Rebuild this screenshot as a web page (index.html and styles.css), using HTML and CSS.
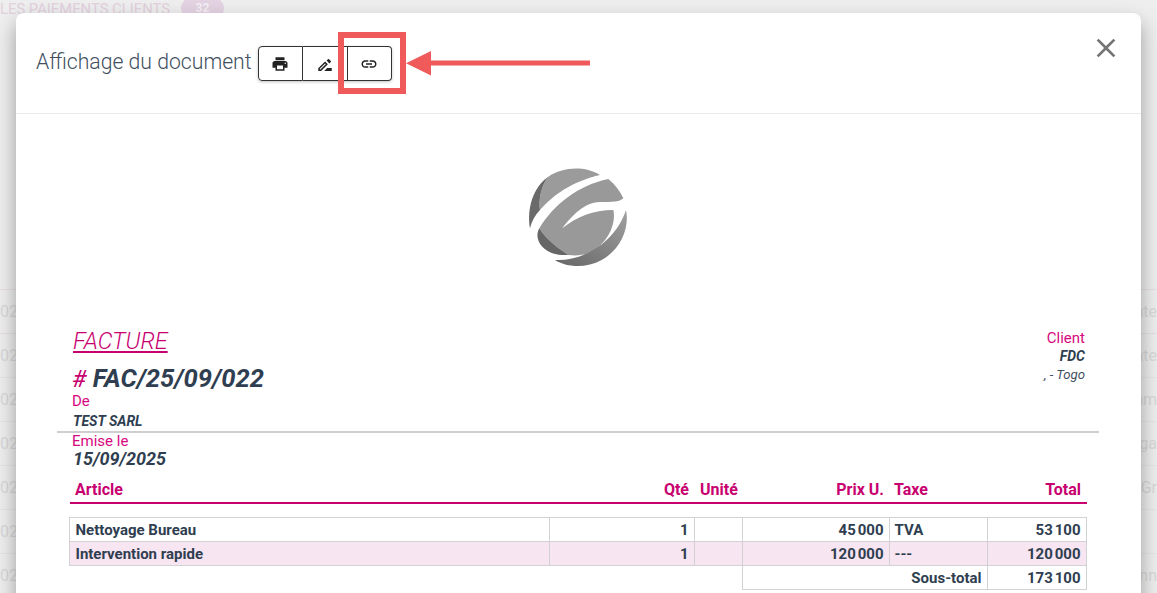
FILE: index.html
```html
<!DOCTYPE html>
<html lang="fr">
<head>
<meta charset="utf-8">
<title>Affichage du document</title>
<link rel="stylesheet" href="styles.css">
</head>
<body>
<div class="page">
  <div class="tabs"><span class="tab-label">LES PAIEMENTS CLIENTS</span><span class="tab-badge">32</span></div>
  <div class="rows">
    <div class="row row-pink"><span>02</span><span>nte</span></div>
    <div class="row row-pink"><span>02</span><span>nte</span></div>
    <div class="row"><span>02</span><span>nm</span></div>
    <div class="row"><span>02</span><span>nga</span></div>
    <div class="row"><span>02</span><span>Gr</span></div>
    <div class="row"><span>02</span><span></span></div>
    <div class="row"><span>02</span><span>nn</span></div>
  </div>
</div>

<div class="modal">
  <header class="modal-head">
    <h1 class="modal-title">Affichage du document</h1>
    <div class="btn-group">
      <button class="btn" type="button"><svg class="ic" viewBox="0 0 24 24"><path d="M19 8H5c-1.66 0-3 1.34-3 3v6h4v4h12v-4h4v-6c0-1.66-1.34-3-3-3zm-3 11H8v-5h8v5zm3-7c-.55 0-1-.45-1-1s.45-1 1-1 1 .45 1 1-.45 1-1 1zm-1-9H6v4h12V3z"/></svg></button>
      <button class="btn" type="button"><svg class="ic ic-pen" viewBox="0 0 24 24"><path d="M15 16l-4 4h10v-4h-6zm-2.94-8.81L3 16.25V20h3.75l9.06-9.06-3.75-3.75zM5.92 18H5v-.92l7.06-7.06.92.92L5.92 18zm13.79-9.96c.39-.39.39-1.02 0-1.41l-2.34-2.34c-.2-.2-.45-.29-.71-.29-.25 0-.51.1-.7.29l-1.83 1.83 3.75 3.75 1.83-1.83z"/></svg></button>
      <button class="btn" type="button"><svg class="ic" viewBox="0 0 24 24"><path d="M3.9 12c0-1.71 1.39-3.1 3.1-3.1h4V7H7c-2.76 0-5 2.24-5 5s2.24 5 5 5h4v-1.9H7c-1.71 0-3.1-1.39-3.1-3.1zM8 13h8v-2H8v2zm9-6h-4v1.9h4c1.71 0 3.1 1.39 3.1 3.1s-1.39 3.1-3.1 3.1h-4V17h4c2.76 0 5-2.24 5-5s-2.24-5-5-5z"/></svg></button>
    </div>
    <button class="close" type="button" aria-label="Fermer"><svg viewBox="0 0 24 24"><path d="M19 6.41L17.59 5 12 10.59 6.41 5 5 6.41 10.59 12 5 17.59 6.41 19 12 13.41 17.59 19 19 17.59 13.41 12z"/></svg></button>
  </header>

  <div class="doc">
    <div class="logo">
      <svg viewBox="0 0 315 315" class="logo-svg">
        <defs>
          <linearGradient id="rim" x1="1" y1="0" x2="0" y2="1">
            <stop offset="0" stop-color="#a0a0a0"/>
            <stop offset="1" stop-color="#666666"/>
          </linearGradient>
        </defs>
        <path fill="#9b9b9b" d="M70 35C110 8 175 0 225 30C140 50 85 90 45 135C40 100 50 60 70 35Z"/>
        <path fill="#6a6a6a" d="M15 190C5 130 25 65 70 35C50 60 40 100 45 135C30 150 20 170 15 190Z"/>
        <path fill="#999999" d="M43 190C85 120 160 60 250 42C270 58 285 78 295 100C280 115 245 110 215 112C170 118 135 160 112 190C155 155 205 135 265 135C275 180 245 240 190 265C170 272 150 272 130 270C100 250 65 225 43 190Z"/>
        <path fill="#666666" d="M43 190C65 225 100 250 130 270C100 272 70 265 52 245C36 228 33 208 43 190Z"/>
        <path fill="url(#rim)" d="M90 285C170 290 270 235 303 135C315 190 285 255 230 285C185 310 125 308 90 285Z"/>
      </svg>
    </div>

    <div class="doc-top">
      <div class="doc-left">
        <div class="doc-type">FACTURE</div>
        <div class="doc-num"><span class="pink-plain">#</span> FAC/25/09/022</div>
        <div class="label label-de">De</div>
        <div class="company">TEST SARL</div>
      </div>
      <div class="doc-right">
        <div class="label">Client</div>
        <div class="client-name">FDC</div>
        <div class="client-addr">, - Togo</div>
      </div>
    </div>
    <hr class="sep">
    <div class="label label-date">Emise le</div>
    <div class="date">15/09/2025</div>

    <div class="items-head">
      <span>Article</span><span class="r">Qté</span><span class="unit">Unité</span><span class="r">Prix U.</span><span>Taxe</span><span class="r">Total</span>
    </div>

    <table class="items">
      <colgroup><col class="c1"><col class="c2"><col class="c3"><col class="c4"><col class="c5"><col class="c6"></colgroup>
      <tr><td class="first">Nettoyage Bureau</td><td class="r">1</td><td></td><td class="r">45&#8239;000</td><td>TVA</td><td class="r">53&#8239;100</td></tr>
      <tr class="alt"><td class="first">Intervention rapide</td><td class="r">1</td><td></td><td class="r">120&#8239;000</td><td>---</td><td class="r">120&#8239;000</td></tr>
      <tr><td class="blank" colspan="3"></td><td class="r" colspan="2">Sous-total</td><td class="r">173&#8239;100</td></tr>
    </table>
  </div>
</div>

<div class="mark-box"></div>
<svg class="mark-arrow" viewBox="0 0 184 25"><path d="M184 9.500H25V0L0 12.250 25 24.500V14.500H184z" fill="#f05a5a"/></svg>
</body>
</html>
```
FILE: styles.css
```css
* { box-sizing: border-box; }
html, body { margin: 0; height: 100%; overflow: hidden; }
body { background: #eeeeee; font-family: Roboto, "Liberation Sans", sans-serif; color: #2f3e50; position: relative; }

.page { height: 593px; overflow: hidden; }
.tabs { display: flex; align-items: center; gap: 11px; height: 18px; color: #e2d0dd; font-size: 14.800px; font-weight: 400; white-space: nowrap; }
.tab-badge { background: #e3d2e2; color: #f4eef4; border-radius: 11px; width: 43px; height: 20px; margin-top: -2px; text-align: center; font-size: 12px; font-weight: 700; line-height: 20px; }
.rows { margin-top: 271px; }
.row { height: 44px; display: flex; justify-content: space-between; align-items: center; border-top: 1px solid #e6e6e6; color: #d9d9d9; font-size: 16px; }
.row-pink { border-top-color: #e7dfe5; }

.modal { position: absolute; left: 16px; top: 13px; width: 1125px; height: 600px; background: #fff; border-radius: 8px 8px 0 0; overflow: hidden; box-shadow: 0 10px 20px rgba(0,0,0,.35); }
.modal-head { height: 101px; border-bottom: 1px solid #eaeaea; display: flex; align-items: flex-start; padding: 33px 0 0 20px; position: relative; }
.modal-title { margin: 0; font-size: 21.200px; font-weight: 300; line-height: 29px; color: #3f4f60; white-space: nowrap; padding-top: 1px; }
.btn-group { display: flex; margin-left: 6px; height: 35px; border-radius: 4px; box-shadow: 0 1px 3px rgba(0,0,0,.25); }
.btn { width: 45px; height: 35px; padding: 0; background: #fff; border: 1px solid #333; border-left-width: 0; display: flex; align-items: center; justify-content: center; }
.btn:first-child { width: 45px; border-left-width: 1px; border-radius: 4px 0 0 4px; }
.btn:last-child { width: 44px; border-radius: 0 4px 4px 0; }
.ic { width: 18px; height: 18px; fill: #222; }
.ic-pen { margin-top: 3px; }
.close { position: absolute; right: 19px; top: 19px; width: 32px; height: 32px; padding: 0; border: 0; background: none; }
.close svg { width: 32px; height: 32px; fill: #757575; display: block; }

.doc { padding: 0 41px; }
.logo { display: flex; justify-content: center; padding-top: 51px; height: 213px; }
.logo-svg { width: 105px; height: 105px; display: block; margin-right: 3px; }
.doc-top { display: flex; justify-content: space-between; padding: 0 14px 0 16px; }
.doc-type { font-size: 23.300px; font-style: italic; font-weight: 300; color: #c8006f; text-decoration: underline; line-height: 28px; }
.doc-num { font-size: 25.600px; font-weight: 700; font-style: italic; line-height: 30px; margin: 8px 0 0 -1px; color: #2f3e50; }
.pink-plain { color: #c8006f; font-weight: 400; font-size: 24px; }
.label { color: #d6097e; font-size: 15px; line-height: 18px; }
.label-de { margin-left: -1px; margin-top: -2px; }
.company { font-size: 14px; font-weight: 700; font-style: italic; line-height: 20px; margin-top: 1px; }
.doc-right { text-align: right; padding-top: 2px; padding-right: 1px; }
.client-name { font-size: 14px; font-weight: 700; font-style: italic; line-height: 19px; }
.client-addr { font-size: 13.200px; font-style: italic; line-height: 17px; color: #3f4f60; }
.sep { margin: 0; border: 0; border-top: 2px solid #cfcfcf; width: 1042px; }
.label-date { margin: 0 0 0 15px; line-height: 17px; }
.date { font-size: 18px; font-weight: 700; font-style: italic; line-height: 18px; margin-left: 16px; }

.items-head { display: grid; grid-template-columns: 479px 145px 49px 146px 98px 99px; margin: 12px 13px 0 13px; height: 24px; border-bottom: 2px solid #c8006f; color: #c8006f; font-size: 16px; font-weight: 700; line-height: 20px; }
.items-head span { padding: 0 5px; }
.items-head .unit { padding-left: 6px; }
.items { border-collapse: collapse; table-layout: fixed; width: 1017px; margin: 13px 0 0 11.500px; font-size: 15px; font-weight: 700; color: #2f3e50; }
.c1 { width: 480px; } .c2 { width: 145px; } .c3 { width: 48px; } .c4 { width: 147px; } .c5 { width: 98px; } .c6 { width: 99px; }
.items td { border: 1px solid #d2d2d2; height: 24px; padding: 0 5px; line-height: 20px; }
.items td.first { padding-left: 6px; }
.items td.blank { border: 0; border-top: 1px solid #d2d2d2; }
.alt td { background: #f7e5f1; }
.r { text-align: right; }

.mark-box { position: absolute; left: 338px; top: 32px; width: 68px; height: 62px; border: 6px solid #f05a5a; }
.mark-arrow { position: absolute; left: 406px; top: 50.500px; width: 184px; height: 25px; }
```
